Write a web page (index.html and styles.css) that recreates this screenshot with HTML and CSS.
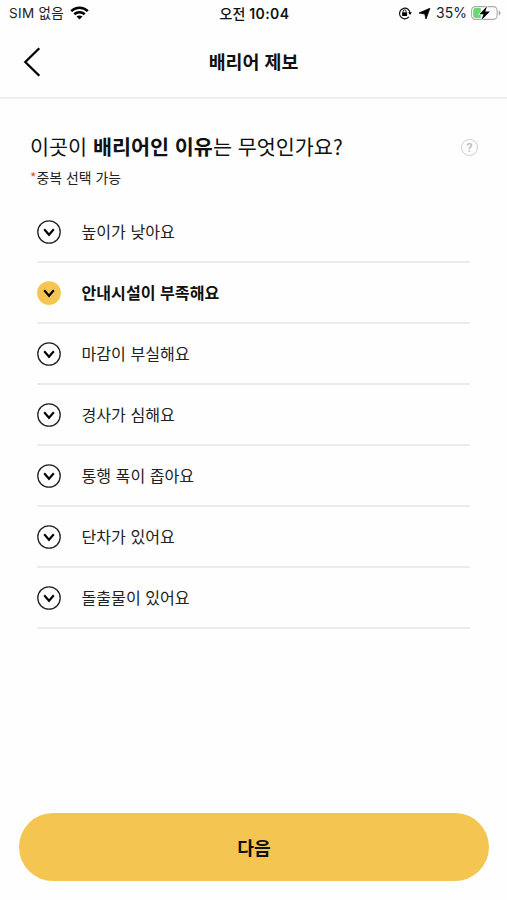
FILE: index.html
```html
<!DOCTYPE html>
<html lang="ko">
<head>
<meta charset="utf-8">
<meta name="viewport" content="width=device-width, initial-scale=1">
<title>배리어 제보</title>
<link rel="stylesheet" href="styles.css">
</head>
<body>
<svg class="defs" width="0" height="0" aria-hidden="true">
  <symbol id="check" viewBox="0 0 24 24"><circle class="ring" cx="12" cy="12" r="11.2"/><path class="tick" d="M7.2 9.3 12 14.8 16.8 9.3"/></symbol>
</svg>
<div class="screen">
  <div class="status">
    <div class="status-left">
      <span class="carrier">SIM 없음</span>
      <svg class="wifi" width="19" height="14" viewBox="0 0 19 14"><path d="M1.2 5.2C5.8.6 13.2.6 17.8 5.2M4.3 8.3c2.9-2.8 7.5-2.8 10.4 0" fill="none" stroke="#000" stroke-width="2.6"/><path d="M6.5 10.5c1.7-1.5 4.3-1.5 6 0l-3 3z"/></svg>
    </div>
    <span class="clock">오전 <span class="digits">10:04</span></span>
    <div class="status-right">
      <svg width="14" height="14" viewBox="0 0 14 14"><path d="M10.9 10.9A5.3 5.3 0 1 1 12.1 8" fill="none" stroke="#111" stroke-width="1.2"/><path d="M10.2 6.3h3.7L12 9z"/><rect x="4.1" y="6.2" width="5" height="3.8" rx=".5"/><path d="M5.1 6.5V5.3a1.5 1.5 0 0 1 3 0v1.2" fill="none" stroke="#111"/></svg>
      <svg class="arrow" width="13" height="13" viewBox="0 0 13 13"><path d="M11.9 1.3 8 12 6.8 7 1 6z" stroke="#000" stroke-width=".8" stroke-linejoin="round"/></svg>
      <span class="percent">35%</span>
      <svg class="battery" width="31" height="16" viewBox="0 0 31 16"><rect x=".6" y="1.6" width="25.5" height="12.8" rx="3.8" fill="#fff" stroke="#aaa" stroke-width="1.1"/><path d="M4.5 3h5.3v10H4.5a2.3 2.3 0 0 1-2.3-2.3V5.3A2.3 2.3 0 0 1 4.5 3z" fill="#6bd777"/><path d="M27.7 5.5c2.5 1 2.5 4 0 5z" fill="#aaa"/><path d="M16 1.2 8.4 9.2h4.1l-2.2 6 8.6-8.7h-4.6z" stroke="#fff" stroke-width="1.2" paint-order="stroke"/></svg>
    </div>
  </div>
  <header class="header">
    <svg class="back" width="18" height="30" viewBox="0 0 18 30"><path d="M16.3 1.3 2.3 15l14 13.7" fill="none" stroke="#000" stroke-width="2.3"/></svg>
    <h1>배리어 제보</h1>
  </header>
  <main>
    <div class="question">
      <h2>이곳이 <b>배리어인 이유</b>는 무엇인가요?</h2>
      <span class="help">?</span>
    </div>
    <p class="note"><span class="star">*</span>중복 선택 가능</p>
    <ul class="options">
      <li><svg class="check"><use href="#check"/></svg><span>높이가 낮아요</span></li>
      <li class="selected"><svg class="check"><use href="#check"/></svg><span>안내시설이 부족해요</span></li>
      <li><svg class="check"><use href="#check"/></svg><span>마감이 부실해요</span></li>
      <li><svg class="check"><use href="#check"/></svg><span>경사가 심해요</span></li>
      <li><svg class="check"><use href="#check"/></svg><span>통행 폭이 좁아요</span></li>
      <li><svg class="check"><use href="#check"/></svg><span>단차가 있어요</span></li>
      <li><svg class="check"><use href="#check"/></svg><span>돌출물이 있어요</span></li>
    </ul>
  </main>
  <button class="next" type="button">다음</button>
</div>
</body>
</html>
```
FILE: styles.css
```css
* { box-sizing: border-box; margin: 0; padding: 0; }
body {
  background: #fefefe;
  color: #111;
  font-family: "Noto Sans CJK KR", sans-serif;
}
.defs { display: block; height: 0; }
.screen {
  display: flex;
  flex-direction: column;
  height: 900px;
  padding-bottom: 19px;
}
.status {
  display: grid;
  grid-template-columns: 1fr auto 1fr;
  align-items: center;
  height: 26px;
  padding: 0 5px 0 9px;
  font-size: 13.5px;
  line-height: 20px;
  white-space: nowrap;
}
.status-left, .status-right { display: flex; align-items: center; }
.status-right { justify-content: flex-end; }
.carrier { font-family: Inter, "Noto Sans CJK KR", sans-serif; letter-spacing: .3px; color: #222; }
.wifi { margin-left: 6px; }
.clock { position: relative; left: -1px; font-weight: 500; font-size: 14px; }
.digits { font-family: Inter, sans-serif; font-weight: 600; letter-spacing: .4px; }
.arrow { margin-left: 6px; }
.percent { margin: 0 4px 0 5px; font-family: Inter, sans-serif; font-size: 14px; color: #222; }
.header {
  display: grid;
  grid-template-columns: 1fr auto 1fr;
  align-items: center;
  height: 73px;
  padding: 0 23px;
  border-bottom: 2px solid #eee;
}
h1 { margin-top: -2px; font-size: 18.4px; line-height: 28px; font-weight: 700; }
main { flex: 1; padding: 31px 29px 0 30px; }
.question { display: flex; align-items: center; justify-content: space-between; }
h2 { font-size: 20.7px; line-height: 32px; font-weight: 400; }
.help {
  width: 17px;
  height: 17px;
  margin-top: 2px;
  border: 1.5px solid #ccc;
  border-radius: 50%;
  color: #bbb;
  font: 600 12px/15px Inter, sans-serif;
  text-align: center;
}
.note { margin-top: 5px; font-size: 13.9px; line-height: 20px; color: #222; }
.star { color: #f0522b; }
.options { margin: 14.5px 8px 0 7px; list-style: none; }
.options li {
  display: flex;
  align-items: center;
  gap: 20.5px;
  height: 61.1px;
  border-bottom: 2px solid #ebebeb;
  font-size: 16.1px;
  line-height: 24px;
  color: #222;
}
.options span { margin-top: -1px; }
.check { width: 24px; height: 24px; margin-top: 1px; }
.ring { fill: var(--dot, #fff); stroke: var(--dot, #222); stroke-width: 1.3; }
.tick { fill: none; stroke: #000; stroke-width: 2.1; }
.options .selected { font-weight: 700; color: #111; }
.selected .check { --dot: #f4c550; }
.next {
  height: 68px;
  margin: 0 18px 0 19px;
  border: 0;
  border-radius: 34px;
  background: #f4c550;
  color: #111;
  font: 700 18.2px/28px "Noto Sans CJK KR", sans-serif;
}
```
